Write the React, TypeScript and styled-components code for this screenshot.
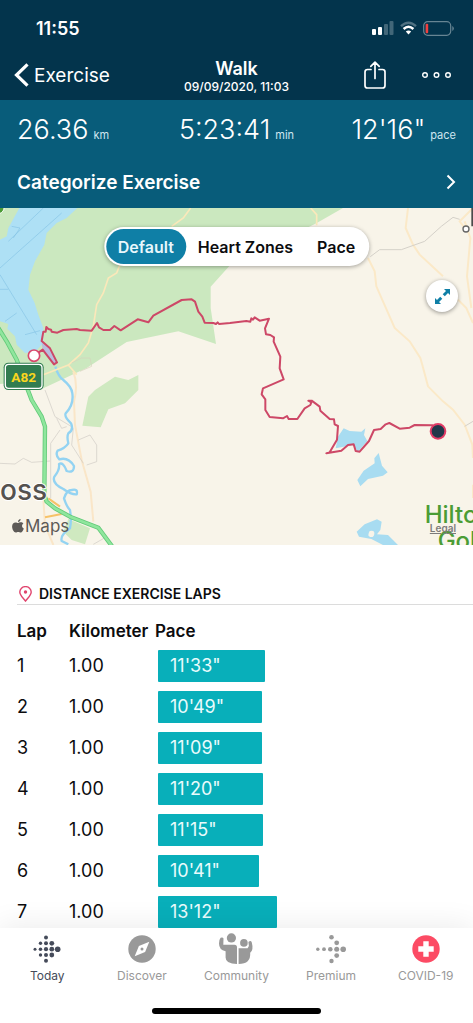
import React from 'react';
import styled, { createGlobalStyle } from 'styled-components';

const GlobalStyle = createGlobalStyle`
  *, *::before, *::after { box-sizing: border-box; }
  body { margin: 0; background: #fff; color: #0c0c0e; font-family: Inter, "Liberation Sans", sans-serif; }
  button { font: inherit; color: inherit; background: none; border: 0; padding: 0; cursor: pointer; }
  a { color: inherit; text-decoration: none; }
  svg { display: block; flex: none; }
`;

const Screen = styled.div`
  display: flex;
  flex-direction: column;
  height: 100vh;
  overflow: hidden;
`;

const Header = styled.header`
  background: #03344c;
  color: #fff;
`;

const StatusBar = styled.div`
  display: flex;
  align-items: center;
  justify-content: space-between;
  height: 50px;
  padding: 6px 19px 0 36px;
  font-size: 18px;
  font-weight: 600;
`;

const StatusIcons = styled.div`
  display: flex;
  align-items: center;
  gap: 6px;
`;

const NavBar = styled.nav`
  display: grid;
  grid-template-columns: 1fr auto 1fr;
  align-items: center;
  height: 50px;
  padding: 0 14px;
`;

const BackLink = styled.a`
  display: flex;
  align-items: center;
  gap: 5px;
  font-size: 19px;
`;

const TitleBlock = styled.div`
  text-align: center;
`;

const Title = styled.h1`
  margin: 0;
  padding-top: 4px;
  font-size: 18px;
  line-height: 20px;
  font-weight: 600;
`;

const Subtitle = styled.div`
  font-size: 12px;
  line-height: 16px;
  font-weight: 500;
`;

const NavActions = styled.div`
  display: flex;
  align-items: center;
  justify-content: flex-end;
  gap: 36px;
  padding-right: 8px;
`;

const Summary = styled.section`
  background: #085c7a;
  color: #fff;
  padding: 0 17px;
`;

const Stats = styled.div`
  display: grid;
  grid-template-columns: 1fr auto 1fr;
  align-items: center;
  height: 58px;
  padding-top: 2px;
`;

const Stat = styled.div`
  display: flex;
  align-items: baseline;
  gap: 5px;

  &:last-child {
    justify-content: flex-end;
  }
`;

const StatValue = styled.span`
  font-size: 27px;
  line-height: 32px;
  font-weight: 300;
`;

const StatUnit = styled.span`
  font-size: 11px;
  color: #cfe6f0;
`;

const CategorizeButton = styled.button`
  display: flex;
  align-items: center;
  justify-content: space-between;
  width: 100%;
  height: 50px;
  padding-bottom: 2px;
  font-size: 19px;
  font-weight: 600;
`;

const Content = styled.main`
  flex: 1;
  min-height: 0;
  overflow-y: auto;
  scrollbar-width: none;
`;

const MapArea = styled.section`
  position: relative;
  height: 337px;
  overflow: hidden;
  background: #f8f4e9;
`;

const MapDrawing = styled.svg`
  width: 100%;
  height: 100%;
`;

const Segments = styled.div`
  position: absolute;
  top: 19px;
  left: 50%;
  transform: translateX(-50%);
  display: flex;
  height: 39px;
  padding: 2px;
  border-radius: 20px;
  background: #fff;
  box-shadow: 0 1px 4px rgba(0, 0, 0, 0.35);
`;

const Segment = styled.button<{ $active?: boolean }>`
  padding: 0 12px;
  border-radius: 18px;
  font-size: 16px;
  font-weight: 600;
  white-space: nowrap;
  background: ${(p) => (p.$active ? '#0f7fa6' : 'transparent')};
  color: ${(p) => (p.$active ? '#e9f7fc' : '#0c0c0e')};
`;

const ExpandButton = styled.button`
  position: absolute;
  top: 72px;
  right: 15px;
  display: grid;
  place-items: center;
  width: 32px;
  height: 32px;
  border-radius: 50%;
  background: #fff;
  box-shadow: 0 1px 4px rgba(0, 0, 0, 0.4);
`;

const MapBrand = styled.div`
  position: absolute;
  left: 12px;
  bottom: 9px;
  display: flex;
  align-items: center;
  gap: 1px;
  font-size: 17px;
  line-height: 20px;
  color: #5d5a57;
`;

const LegalLink = styled.a`
  position: absolute;
  right: 17px;
  bottom: 11px;
  font-size: 10px;
  line-height: 12px;
  font-weight: 600;
  color: #7d7b7b;
  text-decoration: underline;
`;

const Laps = styled.section`
  padding: 38px 0 0 17px;
`;

const LapsTitle = styled.h2`
  display: flex;
  align-items: center;
  gap: 7px;
  height: 22px;
  margin: 0 0 10px;
  padding-left: 2px;
  border-bottom: 1px solid #dcdcdc;
  font-size: 14px;
  font-weight: 600;
`;

const LapTable = styled.table`
  width: 100%;
  table-layout: fixed;
  border-collapse: collapse;
  font-size: 18px;
`;

const HeadCell = styled.th<{ $width?: number }>`
  width: ${(p) => (p.$width ? `${p.$width}px` : 'auto')};
  height: 30px;
  padding: 2px 0 0;
  text-align: left;
  font-size: 17px;
  font-weight: 600;
  white-space: nowrap;
`;

const Cell = styled.td`
  height: 41px;
  padding: 0;
`;

const PaceCell = styled(Cell)`
  padding-left: 3px;
`;

const PaceBar = styled.div<{ $width: number }>`
  display: flex;
  align-items: center;
  width: ${(p) => p.$width}px;
  height: 32px;
  padding-left: 12px;
  border-radius: 1px;
  background: #08afba;
  color: #e9fbfc;
`;

const TabBar = styled.nav`
  position: relative;
  display: grid;
  grid-template-columns: repeat(5, 1fr);
  height: 95px;
  padding-top: 5px;
  background: #fff;
  box-shadow: 0 0 32px rgba(0, 0, 0, 0.09);
`;

const Tab = styled.a<{ $active?: boolean }>`
  display: flex;
  flex-direction: column;
  align-items: center;
  height: 60px;
  gap: 3px;
  font-size: 12px;
  line-height: 18px;
  color: ${(p) => (p.$active ? '#454b5a' : '#999')};
`;

const HomeIndicator = styled.div`
  position: absolute;
  left: 50%;
  bottom: 9px;
  width: 169px;
  height: 6px;
  margin-left: -85px;
  border-radius: 3px;
  background: #000;
`;

const laps = [
  { lap: 1, km: '1.00', pace: `11'33"`, width: 107 },
  { lap: 2, km: '1.00', pace: `10'49"`, width: 104 },
  { lap: 3, km: '1.00', pace: `11'09"`, width: 104 },
  { lap: 4, km: '1.00', pace: `11'20"`, width: 105 },
  { lap: 5, km: '1.00', pace: `11'15"`, width: 105 },
  { lap: 6, km: '1.00', pace: `10'41"`, width: 101 },
  { lap: 7, km: '1.00', pace: `13'12"`, width: 119 },
];

const SignalIcon = () => (
  <svg width="22" height="14" viewBox="0 0 22 14" fill="#fff">
    <rect x="0" y="8" width="4" height="6" rx="1" />
    <rect x="6" y="6" width="4" height="8" rx="1" />
    <rect x="12" y="3" width="4" height="11" rx="1" opacity=".25" />
    <rect x="17.5" y="0" width="4" height="14" rx="1" opacity=".25" />
  </svg>
);

const WifiIcon = () => (
  <svg width="17" height="14" viewBox="0 0 17 14" fill="none">
    <path d="M1 5.200Q8.500 -1.800 16 5.200" stroke="#fff" strokeOpacity=".3" strokeWidth="2.400" />
    <path d="M3.600 8Q8.500 3.600 13.400 8" stroke="#fff" strokeWidth="2.500" />
    <path d="M5.800 10.600Q8.500 8.200 11.200 10.600L8.500 13.400Z" fill="#fff" />
  </svg>
);

const BatteryIcon = () => (
  <svg width="31" height="15" viewBox="0 0 31 15" fill="none">
    <rect x=".7" y=".7" width="27" height="13.600" rx="4" stroke="#fff" strokeOpacity=".4" strokeWidth="1.200" />
    <rect x="2.600" y="2.800" width="2.600" height="9.400" rx="1" fill="#f0403f" />
    <path d="M29.300 5v5q1.500-.8 1.500-2.500T29.300 5Z" fill="#fff" fillOpacity=".4" />
  </svg>
);

const BackIcon = () => (
  <svg width="15" height="24" viewBox="0 0 15 24" fill="none" stroke="#fff" strokeWidth="3.200">
    <path d="M13.500 1.300 2.500 12l11 10.700" />
  </svg>
);

const ShareIcon = () => (
  <svg width="22" height="28" viewBox="0 0 22 28" fill="none" stroke="#fff" strokeWidth="1.700" strokeLinecap="round" strokeLinejoin="round">
    <path d="M7 8.500H3.500Q1 8.500 1 11v13.500Q1 27 3.500 27h15q2.500 0 2.500-2.500V11q0-2.500-2.500-2.500H15M11 17.500V1.300M6.800 5.300 11 1.100l4.200 4.200" />
  </svg>
);

const MoreIcon = () => (
  <svg width="29" height="8" viewBox="0 0 29 8" fill="none" stroke="#fff" strokeWidth="1.400">
    <circle cx="3" cy="4" r="2.300" />
    <circle cx="14.500" cy="4" r="2.300" />
    <circle cx="26" cy="4" r="2.300" />
  </svg>
);

const ChevronIcon = () => (
  <svg width="10" height="16" viewBox="0 0 10 16" fill="none" stroke="#fff" strokeWidth="2">
    <path d="m1.500 1.500 6.500 6.500-6.500 6.500" />
  </svg>
);

const ExpandIcon = () => (
  <svg width="15" height="15" viewBox="0 0 15 15" fill="#0f7fa6">
    <path d="M9 0H15v6l-2-2L9.800 7.300 7.700 5.200 11 2ZM6 15H0V9l2 2L5.200 7.700l2.100 2.100L4 13Z" />
  </svg>
);

const AppleIcon = () => (
  <svg width="12" height="14" viewBox="0 0 12 14" fill="#5d5a57">
    <path d="M8.600.1C8.700 1.700 7.500 3 6 3 5.900 1.600 7.200.2 8.600.1ZM6.200 4C6.800 4 7.700 3.200 8.900 3.300c1 0 1.900.5 2.500 1.300C9.400 5.900 9.700 8.700 11.800 9.500 11.200 11.300 10 13.500 8.700 13.500 7.700 13.500 7.400 12.900 6.200 12.900 5.100 12.900 4.700 13.500 3.800 13.500 1.900 13.500.1 10.300.1 7.500.1 4.900 1.700 3.400 3.500 3.400 4.600 3.400 5.500 4 6.200 4Z" />
  </svg>
);

const PinIcon = () => (
  <svg width="13" height="16" viewBox="0 0 13 16" fill="none" stroke="#e0456e" strokeWidth="1.400">
    <path d="M6.500 15C4 11.700.8 9.300.8 6a5.700 5.400 0 0 1 11.400 0c0 3.300-3.200 5.700-5.700 9Z" />
    <circle cx="6.500" cy="6" r="1.700" fill="#e0456e" stroke="none" />
  </svg>
);

type Dot = [number, number, number];

const todayDots: Dot[] = [
  [13, 2.5, 2], [7.5, 8.3, 1.7], [13, 8.3, 2], [18.8, 8.3, 2.4],
  [2, 14.2, 1.5], [7.5, 14.2, 1.8], [13, 14.2, 2.1], [18.8, 14.2, 2.4], [24.7, 14.2, 2.8],
  [7.5, 20, 1.7], [13, 20, 2], [18.8, 20, 2.4], [13, 25.8, 2],
];

const premiumDots: Dot[] = [
  [15.5, 2.3, 2.3], [20.7, 7.8, 2.4],
  [1.8, 14.2, 1.7], [8, 14.2, 1.9], [14.3, 14.2, 2.3], [20.7, 14.2, 2.5], [27.2, 14.2, 2.8],
  [20.7, 20.6, 2.4], [15.5, 26, 2.2],
];

const DotsIcon = ({ dots, width }: { dots: Dot[]; width: number }) => (
  <svg width={width} height="31" viewBox={`0 0 ${width} 31`} fill="currentColor">
    <g transform="translate(0 2)">
      {dots.map(([cx, cy, r]) => (
        <circle key={`${cx}-${cy}`} cx={cx} cy={cy} r={r} />
      ))}
    </g>
  </svg>
);

const CompassIcon = () => (
  <svg width="28" height="31" viewBox="0 0 28 31">
    <circle cx="14" cy="16" r="13.700" fill="currentColor" />
    <path d="m21.300 8.700-4.200 10.400L6.700 23.300l4.200-10.400Z" fill="#fff" />
    <circle cx="14" cy="16" r="1.500" fill="currentColor" />
  </svg>
);

const CommunityIcon = () => (
  <svg width="36" height="31" viewBox="0 0 36 31" fill="currentColor">
    <circle cx="13.400" cy="4.900" r="4.600" />
    <path d="M2.600 4.800q2.400-.8 2.900.8L5.300 11.800H16.500q2.500 0 2.500 2.500V31Q7.600 31 7.600 24.500V18.300Q1 17 1 10.500Q1.100 6.500 2.600 4.800Z" />
    <circle cx="25.900" cy="9.900" r="3.800" />
    <path d="M20.600 15.200h9l1.300-2.200-.5-4q2.500-2 3.400.5 2 7.500-1.600 10.300Q33 31 20.600 31Z" />
  </svg>
);

const CovidIcon = () => (
  <svg width="28" height="31" viewBox="0 0 28 31">
    <circle cx="14" cy="16" r="13.700" fill="#fc4b64" />
    <path d="M11.300 8.300h5.400v5h5v5.400h-5v5h-5.400v-5h-5v-5.400h5Z" fill="#fff" />
  </svg>
);

const RouteMap = () => (
  <MapDrawing viewBox="0 0 1419 1011" preserveAspectRatio="xMidYMid slice" role="img" aria-label="Route of the walk">
    {/* parks and open water */}
    <path fill="#cbe8bf" d="M0 0H1029L949 46 688 174 632 236V300L648 408 535 370 380 402 260 480 130 541 85 520 0 528Z" />
    <path fill="#aee0f5" d="M58 0 25 60 20 85 0 95V340L25 348 22 362 45 385 50 410 75 435 105 432 130 405 130 360 115 320 104 285 85 245 90 200 105 160 133 110 140 75 170 45 200 30 232 0Z" />
    <path fill="#b9bede" d="M125 404 150 421 170 463 160 467 128 425Z" />
    <g fill="none" stroke="#86c4e6" strokeWidth="2">
      <path d="M25 100 130 0M0 180 185 15M0 200 110 380M35 55l25 5-20 30M0 244h25M15 340l35-25M75 380l45-12" />
    </g>
    <g transform="translate(0 471)">
      <path fill="#cfe9c0" d="M415 30 385 45 345 35 285 75 265 95 247 182 302 187 325 133 375 115 415 75ZM205 462 190 500 215 525 255 538 270 490Z" />
      {/* minor roads */}
      <g fill="none" stroke="#fae6c8" strokeWidth="6">
        <path d="M220 20Q235 60 222 110L225 180 245 285 272 380 280 470" />
        <path d="M130 400 135 480 160 540" />
      </g>
      <path fill="none" stroke="#f6c268" strokeWidth="6" d="M145 400 180 425M135 457 185 447" />
      <path fill="none" stroke="#cfcac4" strokeWidth="2" d="M0 295 45 297 70 280 95 292 150 288M135 75 165 155 215 185M170 160l15 30 15-5M152 400V235L180 195M235 225l35-15 20 30v50l-30 10M220 190l-5 50 35 55M280 538l35-20" />
      <path fill="none" stroke="#93d3f2" strokeWidth="7" strokeLinejoin="round" d="M166 5Q175 35 190 45 215 65 217 85 222 120 197 145 192 155 213 175 222 195 205 205 200 215 205 235 195 250 173 257 165 270 178 283 205 275 222 303 222 325 200 318 190 290 177 297 180 315 163 335 155 355 190 372 215 390 230 388 235 370 215 375 200 375 192 400 200 425 210 435 215 465 210 490 180 510 185 528L205 538" />
    </g>
    <path fill="none" stroke="#fbe8ba" strokeWidth="5" d="M572 0 550 30 515 55M360 170 350 195 325 210 310 255 290 290 280 355 265 405 240 440 205 471 130 500M205 471 230 500M932 0 950 20V52" />
    <path fill="none" stroke="#d7d2bd" strokeWidth="2" d="M215 465 245 450 270 450 275 475 240 490" />
    <g transform="translate(699 0)" fill="none">
      <path stroke="#fbe9c8" strokeWidth="6" d="M525 0 518 60 540 110 560 140 630 205M675 275 700 300 720 345M695 40 712 90 702 205 715 300M720 0 680 40 695 60M405 150 425 190 430 235 485 360 530 400 562 450 568 471 585 535 630 580 660 605 695 650 718 710 720 750M720 830V870" />
      <path stroke="#d5d1c9" strokeWidth="3" d="M412 146 440 125 505 125 575 100 625 55 660 28 680 34M695 655 720 640" />
    </g>
    {/* trunk road */}
    <g fill="none" strokeLinejoin="round">
      <path stroke="#62c978" strokeWidth="13" d="M-5 360 20 400 50 455 85 550 95 576 125 626 135 656 133 861 140 881 165 901 210 926 295 959 340 1020" />
      <path stroke="#8fe69d" strokeWidth="8" d="M-5 360 20 400 50 455 85 550 95 576 125 626 135 656 133 861 140 881 165 901 210 926 295 959 340 1020" />
    </g>
    {/* small lochs */}
    <g transform="translate(699 471)" fill="#a8dcf1">
      <path d="M332 190 350 198 385 200 397 190 393 210 403 228 375 260 360 240 308 250 315 215Z" />
      <path d="M437 264 447 302 464 322 450 332 405 342 382 364 373 345 392 317 425 295 424 280Z" />
      <path fillRule="evenodd" d="M432 463 446 470 442 495 432 508 465 510 480 525 495 540H450L415 522 378 515 371 500 395 478ZM410 498q15-4 14 8t-12 10-2-18Z" />
    </g>
    {/* place names */}
    <g fontFamily="Inter, sans-serif" fontWeight="500" strokeWidth="6" paintOrder="stroke">
      <text x="0" y="877" fontSize="84" fill="#55524f" stroke="#fff">oss</text>
      <g fontSize="72" fill="#4b9c35" stroke="#f8f4e9">
        <text x="1274" y="946">Hilton</text>
        <text x="1313" y="1024">Golf</text>
      </g>
    </g>
    <path fill="#4b4b4b" d="M1414 0h5v55h-5Z" />
    <circle cx="1398" cy="63" r="9" fill="#fff" stroke="#666" strokeWidth="4" />
    <path fill="#4b9c35" stroke="#fff" strokeWidth="3" d="M-4-4h16q2 16-16 22Z" />
    {/* walked route */}
    <path
      fill="none"
      stroke="#cd4867"
      strokeWidth="6"
      strokeLinejoin="round"
      d="M102 443 128 425 162 469 171 463 150 421 125 399 130 371 137 371 139 357 145 363 153 365 155 371 172 374 190 366 230 363 240 366 275 368 291 345 297 358 310 366 330 366 343 354 362 367 413 334 445 343 460 323 545 276 575 274 585 281 595 311 607 326 614 344 640 345 648 348 653 343 657 348 690 345 739 339 751 341 754 331 759 335 764 328 779 338 807 332 795 361 798 379 811 381 822 388 821 401 841 446 839 481 851 514 789 541 785 559 796 574 796 606 809 627 849 631 861 624 866 633 892 633 914 601 931 591 934 583 925 578 935 578 959 596 961 608 989 633 1002 634 1004 649 1014 654 1011 695 989 733 979 736 1024 728 1044 711 1061 709 1067 729 1079 731 1107 699 1122 666 1142 663 1157 649 1168 645 1199 662 1229 659 1244 651 1299 652 1314 668"
    />
    <circle cx="102" cy="443" r="17" fill="#fff" stroke="#d9486d" strokeWidth="5" />
    <circle cx="1314" cy="670" r="22" fill="#22374a" stroke="#e23b66" strokeWidth="6" />
    {/* road shield */}
    <rect x="11" y="464" width="120" height="82" rx="14" fill="#317c50" />
    <rect x="16" y="469" width="110" height="72" rx="10" fill="#317c50" stroke="#fff" strokeWidth="4" />
    <text x="71" y="521" textAnchor="middle" fontFamily="Roboto, sans-serif" fontWeight="700" fontSize="41" fill="#fad51e">A82</text>
  </MapDrawing>
);

export default function App() {
  return (
    <Screen>
      <GlobalStyle />
      <Header>
        <StatusBar>
          <span>11:55</span>
          <StatusIcons>
            <SignalIcon />
            <WifiIcon />
            <BatteryIcon />
          </StatusIcons>
        </StatusBar>
        <NavBar>
          <BackLink href="#exercise">
            <BackIcon />
            Exercise
          </BackLink>
          <TitleBlock>
            <Title>Walk</Title>
            <Subtitle>09/09/2020, 11:03</Subtitle>
          </TitleBlock>
          <NavActions>
            <button type="button" aria-label="Share"><ShareIcon /></button>
            <button type="button" aria-label="More"><MoreIcon /></button>
          </NavActions>
        </NavBar>
      </Header>
      <Summary>
        <Stats>
          <Stat><StatValue>26.36</StatValue><StatUnit>km</StatUnit></Stat>
          <Stat><StatValue>5:23:41</StatValue><StatUnit>min</StatUnit></Stat>
          <Stat><StatValue>12'16"</StatValue><StatUnit>pace</StatUnit></Stat>
        </Stats>
        <CategorizeButton type="button">
          Categorize Exercise
          <ChevronIcon />
        </CategorizeButton>
      </Summary>
      <Content>
        <MapArea>
          <RouteMap />
          <Segments>
            <Segment type="button" $active>Default</Segment>
            <Segment type="button">Heart Zones</Segment>
            <Segment type="button">Pace</Segment>
          </Segments>
          <ExpandButton type="button" aria-label="Expand map"><ExpandIcon /></ExpandButton>
          <MapBrand><AppleIcon />Maps</MapBrand>
          <LegalLink href="#legal">Legal</LegalLink>
        </MapArea>
        <Laps>
          <LapsTitle><PinIcon />DISTANCE EXERCISE LAPS</LapsTitle>
          <LapTable>
            <thead>
              <tr>
                <HeadCell $width={52}>Lap</HeadCell>
                <HeadCell $width={86}>Kilometer</HeadCell>
                <HeadCell>Pace</HeadCell>
              </tr>
            </thead>
            <tbody>
              {laps.map((row) => (
                <tr key={row.lap}>
                  <Cell>{row.lap}</Cell>
                  <Cell>{row.km}</Cell>
                  <PaceCell><PaceBar $width={row.width}>{row.pace}</PaceBar></PaceCell>
                </tr>
              ))}
            </tbody>
          </LapTable>
        </Laps>
      </Content>
      <TabBar>
        <Tab href="#today" $active><DotsIcon dots={todayDots} width={28} />Today</Tab>
        <Tab href="#discover"><CompassIcon />Discover</Tab>
        <Tab href="#community"><CommunityIcon />Community</Tab>
        <Tab href="#premium"><DotsIcon dots={premiumDots} width={30} />Premium</Tab>
        <Tab href="#covid"><CovidIcon />COVID-19</Tab>
        <HomeIndicator />
      </TabBar>
    </Screen>
  );
}
